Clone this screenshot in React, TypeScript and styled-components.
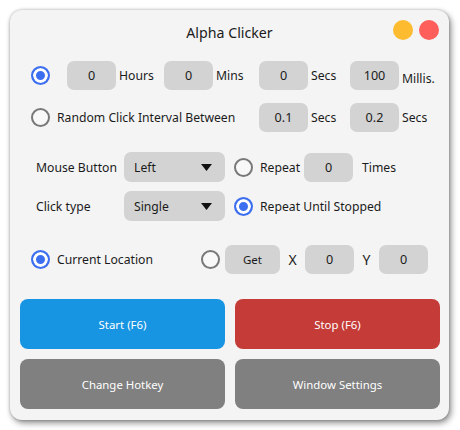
import React from 'react';
import styled, { createGlobalStyle } from 'styled-components';

const GlobalStyle = createGlobalStyle`
  html, body {
    margin: 0;
    padding: 0;
    background: #ffffff;
  }
  body {
    font-family: 'Noto Sans', 'Open Sans', sans-serif;
    color: #1b1b1b;
  }
`;

const App = () => {
  return (
    <Page>
      <GlobalStyle />
      <Window>
        <TitleBar>
          <Title>Alpha Clicker</Title>
          <Dots>
            <Dot color="#fdbc2f" />
            <Dot color="#fe5f5b" />
          </Dots>
        </TitleBar>

        <Row top="9px">
          <RadioSlot width="36px">
            <Radio $checked />
          </RadioSlot>
          <Unit width="97px">
            <Field>0</Field>
            <UnitLabel>Hours</UnitLabel>
          </Unit>
          <Unit width="95px">
            <Field>0</Field>
            <UnitLabel>Mins</UnitLabel>
          </Unit>
          <Unit width="91px">
            <Field>0</Field>
            <UnitLabel>Secs</UnitLabel>
          </Unit>
          <Unit>
            <Field>100</Field>
            <UnitLabel $low>Millis.</UnitLabel>
          </Unit>
        </Row>

        <Row top="13px">
          <RadioSlot width="228px">
            <Radio />
            <RadioText>Random Click Interval Between</RadioText>
          </RadioSlot>
          <Unit width="91px">
            <Field>0.1</Field>
            <UnitLabel>Secs</UnitLabel>
          </Unit>
          <Unit>
            <Field>0.2</Field>
            <UnitLabel>Secs</UnitLabel>
          </Unit>
        </Row>

        <Row top="20px" height="30px" indent="26px">
          <FieldLabel>Mouse Button</FieldLabel>
          <Select>
            <span>Left</span>
            <Caret />
          </Select>
          <Radio style={{ marginLeft: 9 }} />
          <RadioText width="44px">Repeat</RadioText>
          <Field>0</Field>
          <UnitLabel style={{ marginLeft: 9 }}>Times</UnitLabel>
        </Row>

        <Row top="9px" height="30px" indent="26px">
          <FieldLabel>Click type</FieldLabel>
          <Select>
            <span>Single</span>
            <Caret />
          </Select>
          <Radio $checked style={{ marginLeft: 9 }} />
          <RadioText>Repeat Until Stopped</RadioText>
        </Row>

        <Row top="24px">
          <RadioSlot width="170px">
            <Radio $checked />
            <RadioText>Current Location</RadioText>
          </RadioSlot>
          <Radio />
          <GetButton>Get</GetButton>
          <AxisLabel>X</AxisLabel>
          <Field>0</Field>
          <AxisLabel>Y</AxisLabel>
          <Field>0</Field>
        </Row>

        <Actions>
          <ActionButton color="#1794e2">Start (F6)</ActionButton>
          <ActionButton color="#c43b37">Stop (F6)</ActionButton>
          <ActionButton color="#808080">Change Hotkey</ActionButton>
          <ActionButton color="#808080">Window Settings</ActionButton>
        </Actions>
      </Window>
    </Page>
  );
};

export default App;

const Caret = () => (
  <svg width="11" height="7" viewBox="0 0 11 7">
    <path d="M0 0 H11 L5.5 7 Z" fill="#111" />
  </svg>
);

const Page = styled.div`
  padding: 10px 0 0 10px;
  width: 460px;
  height: 430px;
  box-sizing: border-box;
`;

const Window = styled.div`
  width: 439px;
  height: 410px;
  box-sizing: border-box;
  background: #f4f4f4;
  border-radius: 12px;
  box-shadow: 2px 3px 6px rgba(0, 0, 0, 0.45), 0 0 3px rgba(0, 0, 0, 0.25);
  display: flex;
  flex-direction: column;
  overflow: hidden;
`;

const TitleBar = styled.div`
  position: relative;
  height: 42px;
  display: flex;
  align-items: center;
  justify-content: center;
`;

const Title = styled.div`
  font-size: 14.2px;
  margin-top: 2px;
  color: #1b1b1b;
`;

const Dots = styled.div`
  position: absolute;
  right: 10px;
  top: 10px;
  display: flex;
  gap: 6px;
`;

const Dot = styled.span<{ color: string }>`
  width: 20px;
  height: 20px;
  border-radius: 50%;
  background: ${({ color }) => color};
`;

const Row = styled.div<{ top: string; height?: string; indent?: string }>`
  display: flex;
  align-items: center;
  margin-top: ${({ top }) => top};
  height: ${({ height }) => height || '29px'};
  padding-left: ${({ indent }) => indent || '21px'};
  font-size: 12.2px;
`;

const RadioSlot = styled.div<{ width: string }>`
  width: ${({ width }) => width};
  display: flex;
  align-items: center;
  flex-shrink: 0;
`;

const Radio = styled.span<{ $checked?: boolean }>`
  width: 19px;
  height: 19px;
  box-sizing: border-box;
  border-radius: 50%;
  flex-shrink: 0;
  border: 2px solid ${({ $checked }) => ($checked ? '#3c6ef0' : '#787878')};
  background: ${({ $checked }) => ($checked ? '#3c6ef0' : '#f8f8f8')};
  box-shadow: inset 0 0 0 3px ${({ $checked }) => ($checked ? '#ffffff' : '#f8f8f8')};
`;

const RadioText = styled.span<{ width?: string }>`
  margin-left: 7px;
  white-space: nowrap;
  width: ${({ width }) => width || 'auto'};
`;

const Unit = styled.div<{ width?: string }>`
  width: ${({ width }) => width || 'auto'};
  display: flex;
  align-items: center;
  flex-shrink: 0;
`;

const Field = styled.div`
  width: 49px;
  height: 29px;
  border-radius: 7px;
  background: #d3d3d3;
  display: flex;
  align-items: center;
  justify-content: center;
  flex-shrink: 0;
  font-size: 12.6px;
`;

const UnitLabel = styled.span<{ $low?: boolean }>`
  margin-left: 3px;
  white-space: nowrap;
  margin-top: ${({ $low }) => ($low ? '6px' : '0')};
`;

const FieldLabel = styled.span`
  width: 88px;
  white-space: nowrap;
`;

const Select = styled.div`
  width: 101px;
  height: 30px;
  box-sizing: border-box;
  border-radius: 7px;
  background: #d3d3d3;
  display: flex;
  align-items: center;
  justify-content: space-between;
  padding: 0 13px 0 10px;
  flex-shrink: 0;
`;

const GetButton = styled.div`
  width: 55px;
  height: 29px;
  margin-left: 5px;
  border-radius: 7px;
  background: #d3d3d3;
  display: flex;
  align-items: center;
  justify-content: center;
  font-size: 11.5px;
`;

const AxisLabel = styled.span`
  width: 25px;
  text-align: center;
  font-size: 14px;
`;

const Actions = styled.div`
  display: grid;
  grid-template-columns: 205px 205px;
  grid-auto-rows: 50px;
  gap: 10px;
  padding: 25px 10px 0;
`;

const ActionButton = styled.div<{ color: string }>`
  background: ${({ color }) => color};
  border-radius: 8px;
  color: #ffffff;
  font-size: 11.4px;
  display: flex;
  align-items: center;
  justify-content: center;
`;
